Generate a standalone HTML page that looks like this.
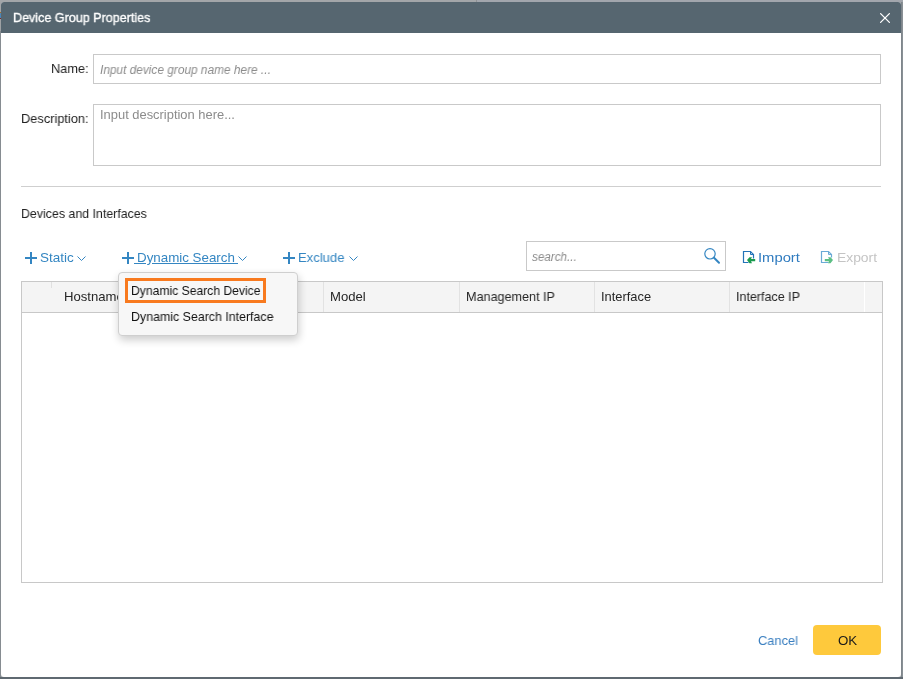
<!DOCTYPE html>
<html><head><meta charset="utf-8">
<style>
html,body{margin:0;padding:0;}
body{width:903px;height:679px;overflow:hidden;background:#a3a6a9;position:relative;font-family:"Liberation Sans",sans-serif;}
.a{position:absolute;}
.t{position:absolute;white-space:nowrap;line-height:1;transform-origin:0 0;will-change:transform;}
.box{position:absolute;border:1px solid #c9c9c9;box-sizing:border-box;background:#fff;}
.sep{position:absolute;top:282px;width:1px;height:30px;background:#e2e2e2;}
</style></head>
<body>
<div class="a" style="left:0;top:0;width:903px;height:2px;background:#a3a6a9;"></div>
<div class="a" style="left:476px;top:0;width:1px;height:2px;background:#8e9194;"></div>
<div class="a" style="left:477px;top:0;width:426px;height:2px;background:#a2a6ad;"></div>
<div class="a" style="left:0;top:2px;width:1px;height:10px;background:#a1a4a7;"></div>
<div class="a" style="left:0;top:12px;width:1px;height:1px;background:#a86c28;"></div>
<div class="a" style="left:0;top:13px;width:1px;height:5px;background:#4c86b8;"></div>
<div class="a" style="left:0;top:18px;width:1px;height:1px;background:#7a2a2a;"></div>
<div class="a" style="left:0;top:19px;width:1px;height:12px;background:#9ea1a4;"></div>
<div class="a" style="left:0;top:31px;width:1px;height:648px;background:#868c91;"></div>
<div class="a" style="left:901px;top:2px;width:1px;height:677px;background:#7f868c;"></div>
<div class="a" style="left:902px;top:2px;width:1px;height:677px;background:#899095;"></div>
<div class="a" style="left:0;top:677px;width:903px;height:2px;background:#5f6971;"></div>
<div class="a" style="left:1px;top:2px;width:900px;height:675px;background:#fff;border-radius:3px;overflow:hidden;">
  <div class="a" style="left:0;top:0;width:900px;height:31px;background:#566670;"></div>
</div>
<div class="t" style="left:12.74px;top:10.89px;font-size:13.0px;transform:scaleX(0.9657);color:#fff;-webkit-text-stroke:0.35px #fff;">Device Group Properties</div>

<svg class="a" style="left:878px;top:11px" width="14" height="14" viewBox="0 0 14 14"><path d="M2.6 2.6L11.4 11.4M11.4 2.6L2.6 11.4" stroke="#fff" stroke-width="1.3" stroke-linecap="round" fill="none"/></svg>

<div class="t" style="left:50.51px;top:62.12px;font-size:13.3px;transform:scaleX(0.9604);color:#222;">Name:</div>

<div class="box" style="left:93px;top:54px;width:788px;height:30px;"></div>
<div class="t" style="left:99.71px;top:64.07px;font-size:12.3px;transform:scaleX(0.9648);color:#8c8c8c;font-style:italic;">Input device group name here ...</div>

<div class="t" style="left:20.62px;top:112.27px;font-size:13.3px;transform:scaleX(0.9627);color:#222;">Description:</div>

<div class="box" style="left:93px;top:104px;width:788px;height:62px;"></div>
<div class="t" style="left:99.56px;top:109.07px;font-size:12.3px;transform:scaleX(1.0498);color:#8c8c8c;">Input description here...</div>

<div class="a" style="left:21px;top:186px;width:860px;height:1px;background:#cfcfcf;"></div>
<div class="t" style="left:20.54px;top:207.17px;font-size:13.3px;transform:scaleX(0.9306);color:#222;">Devices and Interfaces</div>


<svg class="a" style="left:25px;top:252px" width="12" height="12"><path d="M0 6H12M6 0V12" stroke="#3486c2" stroke-width="2"/></svg>
<div class="t" style="left:39.63px;top:251.22px;font-size:13.3px;transform:scaleX(1.0132);color:#3486c2;">Static</div>

<svg class="a" style="left:77px;top:256px" width="10" height="6"><path d="M0.5 0.5L4.5 4.5L8.5 0.5" stroke="#3486c2" stroke-width="1" fill="none"/></svg>

<svg class="a" style="left:122px;top:252px" width="12" height="12"><path d="M0 6H12M6 0V12" stroke="#3486c2" stroke-width="2"/></svg>
<div class="t" style="left:136.6px;top:251.22px;font-size:13.3px;transform:scaleX(1.0035);color:#3486c2;">Dynamic Search</div>

<div class="a" style="left:134px;top:263px;width:12px;height:1px;background:#3486c2;"></div>
<div class="a" style="left:152px;top:263px;width:86px;height:1px;background:#3486c2;"></div>
<svg class="a" style="left:238px;top:256px" width="10" height="6"><path d="M0.5 0.5L4.5 4.5L8.5 0.5" stroke="#3486c2" stroke-width="1" fill="none"/></svg>

<svg class="a" style="left:283px;top:252px" width="12" height="12"><path d="M0 6H12M6 0V12" stroke="#3486c2" stroke-width="2"/></svg>
<div class="t" style="left:297.53px;top:251.22px;font-size:13.3px;transform:scaleX(0.9826);color:#3486c2;">Exclude</div>

<svg class="a" style="left:349px;top:256px" width="10" height="6"><path d="M0.5 0.5L4.5 4.5L8.5 0.5" stroke="#3486c2" stroke-width="1" fill="none"/></svg>

<div class="box" style="left:526px;top:241px;width:200px;height:30px;"></div>
<div class="t" style="left:531.5px;top:251.18px;font-size:12.3px;transform:scaleX(0.949);color:#8c8c8c;font-style:italic;">search...</div>

<svg class="a" style="left:700px;top:244px" width="24" height="24"><circle cx="10" cy="9.8" r="5.2" stroke="#3486c2" stroke-width="1.2" fill="none"/><path d="M14 13.8L19 18.8" stroke="#3486c2" stroke-width="2" stroke-linecap="round"/></svg>

<svg class="a" style="left:742px;top:250px" width="16" height="14"><path d="M6.5 12.5H1.5V1.5H8.5L11.5 4.5V8.5" stroke="#2373b8" stroke-width="1.2" fill="none"/><path d="M8.5 1.5V4.5H11.5" stroke="#2373b8" stroke-width="1" fill="none"/><path d="M5 10L7.5 7.2H10L9 9H13.2V11.3H9L10 13.3H7.5Z" fill="#1a9a4e"/></svg>
<div class="t" style="left:757.73px;top:251.07px;font-size:13.3px;transform:scaleX(1.1119);color:#2f7bbf;">Import</div>

<svg class="a" style="left:820px;top:250px" width="16" height="14"><path d="M8.5 12.5H1.5V1.5H8.5L11.5 4.5V7.5" stroke="#6aaad6" stroke-width="1.2" fill="none"/><path d="M8.5 1.5V4.5H11.5" stroke="#6aaad6" stroke-width="1" fill="none"/><path d="M13 10L10.5 7.2H8L9 9H4.8V11.3H9L8 13.3H10.5Z" fill="#5cbf84"/></svg>
<div class="t" style="left:836.56px;top:251.12px;font-size:13.3px;transform:scaleX(1.0414);color:#c4c4c4;">Export</div>


<div class="a" style="left:21px;top:281px;width:862px;height:302px;border:1px solid #c8c8c8;box-sizing:border-box;background:#fff;"></div>
<div class="a" style="left:22px;top:282px;width:860px;height:30px;background:#f4f4f4;"></div>
<div class="a" style="left:22px;top:312px;width:860px;height:1px;background:#c8c8c8;"></div>
<div class="a" style="left:51px;top:282px;width:1px;height:6px;background:#e0e0e0;"></div>
<div class="sep" style="left:323px;"></div>
<div class="sep" style="left:459px;"></div>
<div class="sep" style="left:594px;"></div>
<div class="sep" style="left:729px;"></div>
<div class="sep" style="left:864px;background:#fff;"></div>
<div class="t" style="left:63.62px;top:291.03px;font-size:12.8px;transform:scaleX(1.0257);color:#262626;">Hostname</div>

<div class="t" style="left:329.72px;top:291.03px;font-size:12.8px;transform:scaleX(1.0257);color:#262626;">Model</div>

<div class="t" style="left:465.51px;top:291.08px;font-size:12.8px;transform:scaleX(0.9837);color:#262626;">Management IP</div>

<div class="t" style="left:600.74px;top:290.98px;font-size:12.8px;transform:scaleX(1.0069);color:#262626;">Interface</div>

<div class="t" style="left:735.63px;top:291.08px;font-size:12.8px;transform:scaleX(0.9771);color:#262626;">Interface IP</div>


<div class="a" style="left:118px;top:272px;width:180px;height:64px;background:#f7f7f7;border:1px solid #cfcfcf;box-sizing:border-box;border-radius:4px;box-shadow:1px 4px 9px rgba(0,0,0,0.2);"></div>
<div class="a" style="left:125px;top:278px;width:141px;height:25px;border:3px solid #f87a1f;box-sizing:border-box;"></div>
<div class="t" style="left:130.62px;top:285.28px;font-size:12.6px;transform:scaleX(0.9632);color:#111;">Dynamic Search Device</div>

<div class="t" style="left:130.61px;top:310.98px;font-size:12.6px;transform:scaleX(0.9828);color:#111;">Dynamic Search Interface</div>


<div class="t" style="left:757.56px;top:633.92px;font-size:13.3px;transform:scaleX(0.9647);color:#3a7fc0;">Cancel</div>

<div class="a" style="left:813px;top:625px;width:68px;height:30px;background:#fec93c;border-radius:4px;"></div>
<div class="t" style="left:837.55px;top:633.92px;font-size:13.3px;transform:scaleX(0.9812);color:#1a1a1a;">OK</div>

</body></html>
